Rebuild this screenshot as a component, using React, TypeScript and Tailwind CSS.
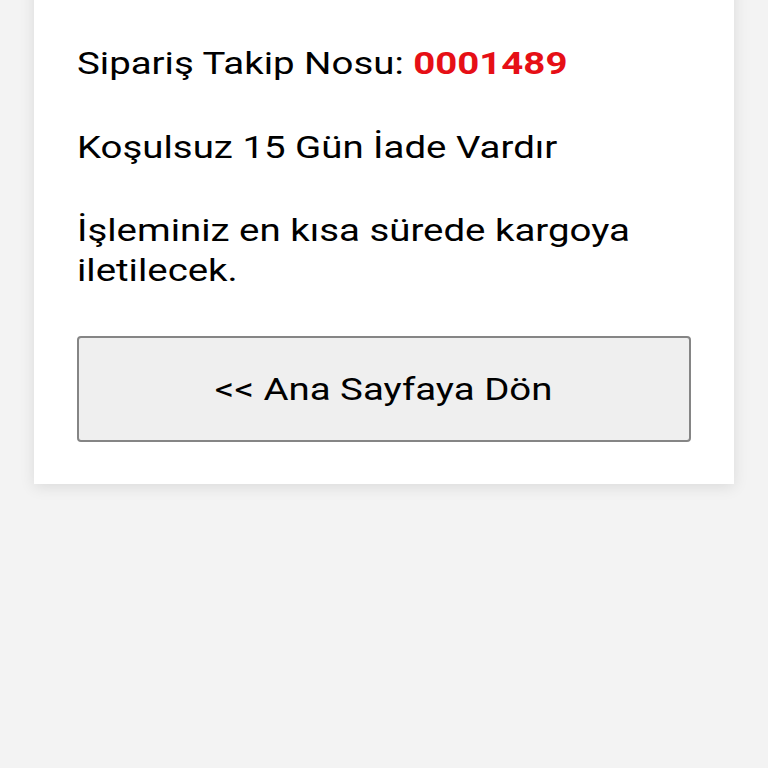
export default function App() {
  return (
    <div
      className="min-h-[768px] bg-[#f3f3f3] overflow-hidden"
      style={{ fontFamily: 'Roboto, "Noto Sans", sans-serif' }}
    >
      <div className="mx-[34px] -mt-[20px] bg-white px-[43px] pt-[63px] pb-[42px] shadow-[0_3px_14px_rgba(0,0,0,0.1)]">
        {/* text is drawn a bit wider than usual, so it is stretched sideways */}
        <div className="w-[512px] origin-left scale-x-[1.2] text-[32px] leading-[40px] text-black">
          <p>
            Sipariş Takip Nosu: <span className="font-bold text-[#e60f16]">0001489</span>
          </p>
          <p className="mt-[44px]">Koşulsuz 15 Gün İade Vardır</p>
          <p className="mt-[43px]">İşleminiz en kısa sürede kargoya iletilecek.</p>
        </div>
        <button className="mt-[46px] flex h-[106px] w-full items-center justify-center rounded-[4px] border-2 border-[#858585] bg-[#efefef] text-[32px] text-black">
          <span className="inline-block scale-x-[1.2]">&lt;&lt; Ana Sayfaya Dön</span>
        </button>
      </div>
    </div>
  );
}
